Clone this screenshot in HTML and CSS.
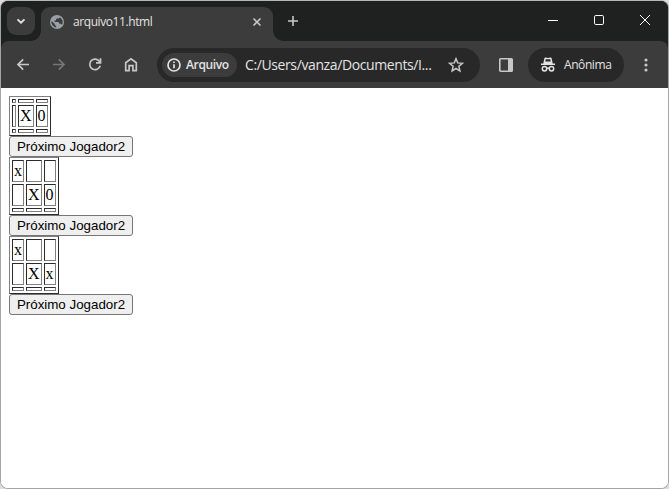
FILE: index.html
```html
<!DOCTYPE html>
<html lang="pt-BR">
<head>
<meta charset="utf-8">
<title>arquivo11.html</title>
<link rel="stylesheet" href="styles.css">
</head>
<body>
<div class="window">
  <header class="tabstrip">
    <div class="search"><svg width="12" height="12" viewBox="0 0 12 12"><path d="M2.5 4.3 6 7.7 9.500 4.300"/></svg></div>
    <div class="tab">
      <svg class="globe" width="14" height="14" viewBox="0 0 14 14"><circle cx="7" cy="7" r="7"/><path d="M8 1.4C8 3 7.5 3.7 6 4v1.6H4.5V7H8c1 0 1.2.7 1.2 1.8h1.2c.8 0 1.2.5 1.5 1.1A5.7 5.7 0 0 0 9.8 2.2L9 3.5H7.8ZM1.5 5.9 4.8 9v1.1l1.4 1v1.5A5.7 5.7 0 0 1 1.5 5.9Z"/></svg>
      <span class="title">arquivo11.html</span>
      <svg class="close" width="10" height="10" viewBox="0 0 10 10"><path d="m1.500 1.500 7 7m0-7-7 7"/></svg>
    </div>
    <svg class="plus" width="12" height="12" viewBox="0 0 12 12"><path d="M6 1v10M1 6h10"/></svg>
    <div class="controls">
      <svg width="12" height="12" viewBox="0 0 12 12"><path d="M1 6.500h10"/></svg>
      <svg width="12" height="12" viewBox="0 0 12 12"><rect x="1.500" y="1.500" width="9" height="9" rx="1.300"/></svg>
      <svg width="12" height="12" viewBox="0 0 12 12"><path d="m1 1 10 10M11 1 1 11"/></svg>
    </div>
  </header>
  <nav class="toolbar">
    <div class="nav">
      <svg width="16" height="16" viewBox="0 0 16 16"><path d="M14 8H3m5.200-5.200L3 8l5.200 5.200"/></svg>
      <svg class="off" width="16" height="16" viewBox="0 0 16 16"><path d="M2 8h11M7.800 2.800 13 8l-5.200 5.200"/></svg>
      <svg width="16" height="16" viewBox="0 0 16 16"><path d="M13.200 9.200A5.300 5.300 0 1 1 12.600 5.100M13.500 1.800v4.500H9"/></svg>
      <svg width="16" height="16" viewBox="0 0 16 16"><path d="M2.700 6.200 8 2.200l5.300 4v8H9.900V9.100H6.100v5.100H2.700Z"/></svg>
    </div>
    <div class="omnibox">
      <div class="chip">
        <svg width="14" height="14" viewBox="0 0 14 14"><circle cx="7" cy="7" r="6"/><path d="M7 6.300v4M7 3.600v1.500"/></svg>
        <b>Arquivo</b>
      </div>
      <span class="url">C:/Users/vanza/Documents/I...</span>
      <svg class="star" width="16" height="16" viewBox="0 0 16 16"><path d="m8 1.700 1.700 4.200 4.700.4-3.500 3 1 4.600L8 11.500l-3.900 2.400 1-4.600-3.500-3 4.700-.4Z"/></svg>
    </div>
    <svg class="panel" width="14" height="14" viewBox="0 0 14 14"><rect x=".8" y=".8" width="12.400" height="12.400" rx=".7"/><path d="M9 1h4.200v12H9Z"/></svg>
    <div class="profile">
      <svg width="16" height="16" viewBox="0 0 16 16"><path class="hat" d="M4.300 1.500c.2-.8.900-1.200 1.600-.9L8 1l2.100-.4c.7-.3 1.400.1 1.600.9l1 5H15V8H1V6.500h2.300ZM5.700 2.300 5.300 4.500h5.400l-.4-2.200H5.700Z"/><circle cx="4.500" cy="11.800" r="2.200"/><circle cx="11.500" cy="11.800" r="2.200"/><path d="M6.700 11.400q1.300-.6 2.600 0"/></svg>
      <span>Anônima</span>
    </div>
    <svg class="dots" width="4" height="16" viewBox="0 0 4 16"><circle cx="2" cy="3" r="1.600"/><circle cx="2" cy="8" r="1.600"/><circle cx="2" cy="13" r="1.600"/></svg>
  </nav>
  <main class="page">
    <table border="1">
      <tr><td></td><td></td><td></td></tr>
      <tr><td></td><td>X</td><td>0</td></tr>
      <tr><td></td><td></td><td></td></tr>
    </table>
    <button>Próximo Jogador2</button>
    <table border="1">
      <tr><td>x</td><td></td><td></td></tr>
      <tr><td></td><td>X</td><td>0</td></tr>
      <tr><td></td><td></td><td></td></tr>
    </table>
    <button>Próximo Jogador2</button>
    <table border="1">
      <tr><td>x</td><td></td><td></td></tr>
      <tr><td></td><td>X</td><td>x</td></tr>
      <tr><td></td><td></td><td></td></tr>
    </table>
    <button>Próximo Jogador2</button>
  </main>
</div>
</body>
</html>
```
FILE: styles.css
```css
* { box-sizing: border-box; }
body { margin: 0; background: #dedede; overflow: hidden; }
svg { display: block; flex: none; fill: none; stroke: #c7c7c7; stroke-width: 1.7; }
.window {
  width: 669px; height: 489px; overflow: hidden;
  border: 1px solid #a5a5a5; border-top-color: #b2bab6; border-radius: 8px;
  background: linear-gradient(#1f2120 60px, #fff 60px);
  display: flex; flex-direction: column;
}
.tabstrip {
  height: 40px; flex: none; display: flex; align-items: flex-start;
  background: #1f2120; font-family: "Open Sans", sans-serif;
}
.search {
  width: 28px; height: 28px; margin: 6px 0 0 6px; border-radius: 9px;
  background: #3c3c3c; display: grid; place-items: center;
}
.search svg { stroke: #e3e3e3; stroke-width: 1.8; }
.tab {
  position: relative; width: 232px; height: 34px; margin: 6px 0 0 6px;
  padding: 0 11px 5px 9px; border-radius: 9px 9px 0 0; background: #3c3c3c;
  display: flex; align-items: center; color: #e3e3e3; font-size: 12px;
}
.tab::before, .tab::after {
  content: ""; position: absolute; bottom: 0; width: 10px; height: 10px;
}
.tab::before { left: -10px; background: radial-gradient(circle at 0 0, transparent 9.500px, #3c3c3c 10px); }
.tab::after { right: -10px; background: radial-gradient(circle at 100% 0, transparent 9.500px, #3c3c3c 10px); }
.globe { stroke: none; fill: #9aa0a6; }
.globe path { fill: #3c3c3c; }
.title { margin-left: 9px; letter-spacing: -.42px; white-space: nowrap; }
.close { margin-left: auto; stroke-width: 1.6; }
.plus { margin: 14px 0 0 14px; stroke-width: 1.6; }
.controls { margin: 13px 17px 0 auto; display: flex; gap: 34px; }
.controls svg { stroke: #fff; stroke-width: 1; }
.toolbar {
  height: 47px; flex: none; display: flex; align-items: center;
  padding: 0 20px 0 14px; background: #3c3c3c; border-radius: 8px 8px 0 0;
  font-family: "Open Sans", sans-serif; color: #e3e3e3;
}
.nav { display: flex; gap: 20px; }
.nav svg { transform: translateY(-.5px); }
.nav .off { stroke: #777; }
.omnibox {
  width: 323px; height: 34px; margin-left: 18px; padding: 0 16px 0 5px;
  border-radius: 17px; background: #282828; display: flex; align-items: center;
}
.chip {
  width: 75px; height: 24px; padding-left: 5px; border-radius: 12px;
  background: #3c3c3c; display: flex; align-items: center; gap: 5px;
}
.chip svg { stroke: #e3e3e3; }
.chip b { font-size: 12px; font-weight: 600; letter-spacing: -.35px; }
.url { margin-left: 8px; font-size: 14px; letter-spacing: -.39px; white-space: nowrap; }
.star { margin-left: auto; stroke-width: 1.5; }
.panel { margin-left: 19px; stroke-width: 1.6; }
.panel path { fill: #c7c7c7; stroke: none; }
.profile {
  width: 96px; height: 34px; margin-left: 15px; padding-left: 12px;
  border-radius: 17px; background: #282828; display: flex; align-items: center;
  gap: 8px; font-size: 12px; letter-spacing: -.42px;
}
.profile svg { stroke: #e3e3e3; stroke-width: 1.5; }
.profile .hat { fill: #e3e3e3; fill-rule: evenodd; stroke: none; }
.dots { margin-left: auto; stroke: none; fill: #c7c7c7; }
.page {
  flex: 1; padding: 8px; background: #fff; color: #000;
  display: flex; flex-direction: column; align-items: flex-start;
}
.page table { font: 16px/18px "Liberation Serif", serif; }
.page button {
  width: 124px; height: 21px; padding: 0; color: #000; background: #efefef;
  border: 1px solid #767676; border-radius: 3px; white-space: nowrap;
  font: 13.333px "Liberation Sans", sans-serif; letter-spacing: 0;
}
```
